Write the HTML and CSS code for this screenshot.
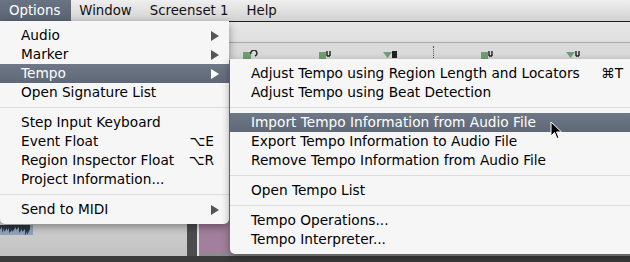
FILE: index.html
```html
<!DOCTYPE html>
<html lang="en">
<head>
    <meta charset="UTF-8">
    <title>Options menu</title>
    <link rel="stylesheet" href="styles.css">
</head>
<body>
    <div class="app">
        <div class="menubar">
            <span class="menubar-item active">Options</span>
            <span class="menubar-item">Window</span>
            <span class="menubar-item">Screenset 1</span>
            <span class="menubar-item">Help</span>
        </div>
        <div class="toolbar-top"></div>
        <div class="toolbar">
            <span class="tool tool-a"><svg width="16" height="10" viewBox="0 0 16 10"><rect x="1" y="2" width="8" height="7" fill="#6f9f73"/><path d="M9 4 a3 3 0 1 1 4 2" stroke="#222" stroke-width="1.4" fill="none"/></svg></span>
            <span class="tool tool-b"><svg width="14" height="10" viewBox="0 0 14 10"><rect x="1" y="2" width="7" height="7" fill="#6f9f73"/><path d="M9 1 v5 M12 1 v5 M9 6 h3" stroke="#222" stroke-width="1.4" fill="none"/></svg></span>
            <span class="tool tool-c"><svg width="16" height="10" viewBox="0 0 16 10"><path d="M1 2 h9 l-4.5 6 z" fill="#6f9f73"/><rect x="10" y="1" width="5" height="7" fill="#222"/></svg></span>
            <span class="dots"></span>
            <span class="tool tool-d"><svg width="14" height="10" viewBox="0 0 14 10"><rect x="1" y="2" width="7" height="7" fill="#6f9f73"/><path d="M9 1 v5 M12 1 v5 M9 6 h3" stroke="#222" stroke-width="1.4" fill="none"/></svg></span>
            <span class="tool tool-e"><svg width="18" height="10" viewBox="0 0 18 10"><path d="M1 2 h9 l-4.5 6 z" fill="#6f9f73"/><path d="M11 1 v5 M14 1 v5 M11 6 h3" stroke="#222" stroke-width="1.4" fill="none"/></svg></span>
        </div>
        <div class="tracks">
            <div class="lane">
                <div class="region-blue"><svg width="33" height="10" viewBox="0 0 33 10"><path d="M0 0 v5 l2 -3 v6 l2 -5 v4 l3 -4 v3 l2 -3 v5 l3 -3 v2 l4 -5 v3 l3 -3 v6 l3 -4 v3 l3 -3 v7 l2 -5 v4 l3 -6 V0 z" fill="#2c3440"/></svg></div>
            </div>
            <div class="divider"></div>
            <div class="lane-pink"></div>
        </div>
        <div class="statusbar"></div>
    </div>

    <div class="menu menu-main">
        <div class="item">Audio<span class="arrow"></span></div>
        <div class="item">Marker<span class="arrow"></span></div>
        <div class="item selected">Tempo<span class="arrow"></span></div>
        <div class="item">Open Signature List</div>
        <div class="sep"></div>
        <div class="item">Step Input Keyboard</div>
        <div class="item">Event Float<span class="key">⌥E</span></div>
        <div class="item">Region Inspector Float<span class="key">⌥R</span></div>
        <div class="item">Project Information...</div>
        <div class="sep"></div>
        <div class="item">Send to MIDI<span class="arrow"></span></div>
    </div>

    <div class="menu menu-sub">
        <div class="item">Adjust Tempo using Region Length and Locators<span class="key">⌘T</span></div>
        <div class="item">Adjust Tempo using Beat Detection</div>
        <div class="sep"></div>
        <div class="item selected">Import Tempo Information from Audio File</div>
        <div class="item">Export Tempo Information to Audio File</div>
        <div class="item">Remove Tempo Information from Audio File</div>
        <div class="sep"></div>
        <div class="item">Open Tempo List</div>
        <div class="sep"></div>
        <div class="item">Tempo Operations...</div>
        <div class="item">Tempo Interpreter...</div>
    </div>

    <svg class="cursor" width="13" height="20" viewBox="0 0 13 20">
        <path d="M1 1 L1 15 L4.5 11.5 L7 17.5 L9 16.6 L6.6 11 L11.5 11 Z" fill="#000" stroke="#fff" stroke-width="1"/>
    </svg>
</body>
</html>
```

FILE: styles.css
```css
body {
    margin: 0;
    width: 630px;
    height: 262px;
    overflow: hidden;
    font-family: 'DejaVu Sans', 'Liberation Sans', sans-serif;
    font-size: 13.7px;
    color: #000;
    position: relative;
}
.app {
    display: flex;
    flex-direction: column;
    height: 262px;
}
.menubar {
    height: 21px;
    display: flex;
    background: linear-gradient(#efefef, #d2d2d2);
    border-bottom: 1px solid #1e1e1e;
    line-height: 21px;
    font-size: 13.3px;
}
.menubar-item {
    padding: 0 10px 0 8px;
    color: #111;
}
.menubar-item.active {
    padding: 0 11px 0 9px;
    background: linear-gradient(#6a7383, #5a6372);
    color: #fff;
}
.toolbar-top {
    height: 20px;
    background: linear-gradient(#e8e8e8, #dedede);
    border-bottom: 1px solid #a9a9a9;
}
.toolbar {
    height: 17px;
    background: #dadada;
    position: relative;
}
.tool {
    position: absolute;
    top: 7px;
    line-height: 0;
}
.tool-a { left: 242px; }
.tool-b { left: 318px; }
.tool-c { left: 382px; }
.tool-d { left: 480px; }
.tool-e { left: 565px; }
.dots {
    position: absolute;
    left: 433px;
    top: 3px;
    height: 14px;
    border-left: 1px dotted #555;
}
.tracks {
    flex: 1;
    display: flex;
}
.lane {
    width: 187px;
    background: linear-gradient(#e6e6e6 70%, #d2d2d2 80%, #c2c2c2);
    display: flex;
    flex-direction: column;
    justify-content: flex-end;
}
.region-blue {
    width: 33px;
    height: 10px;
    margin-bottom: 21px;
    background: #8ea4bd;
    line-height: 0;
}
.divider {
    width: 10px;
    background: #4c4c4c;
    border-right: 2px solid #e4e4e4;
}
.lane-pink {
    flex: 1;
    background: #a27f9c;
    border-bottom: 3px solid #8c8c8c;
}
.statusbar {
    height: 6px;
    background: #3b3b3b;
}

.menu {
    position: absolute;
    background: #f6f6f6;
    padding: 5px 0;
    box-shadow: 0 3px 9px rgba(0, 0, 0, 0.38);
    border-radius: 0 0 5px 5px;
}
.menu-main {
    left: 0;
    top: 21px;
    width: 229px;
}
.menu-sub {
    left: 230px;
    top: 59px;
    width: 410px;
}
.item {
    height: 19px;
    line-height: 19px;
    padding-left: 21px;
    padding-right: 15px;
    display: flex;
    align-items: center;
    white-space: nowrap;
}
.menu-sub .item {
    padding-right: 17px;
}
.item.selected {
    background: linear-gradient(#6f7887, #5f6877);
    color: #fff;
}
.key {
    margin-left: auto;
}
.arrow {
    margin-left: auto;
    margin-right: -5px;
    width: 0;
    height: 0;
    border-top: 5px solid transparent;
    border-bottom: 5px solid transparent;
    border-left: 8px solid #555;
}
.selected .arrow {
    border-left-color: #fff;
}
.sep {
    height: 1px;
    background: #dcdcdc;
    margin: 5px 0;
}
.cursor {
    position: absolute;
    left: 550px;
    top: 121px;
}
```
